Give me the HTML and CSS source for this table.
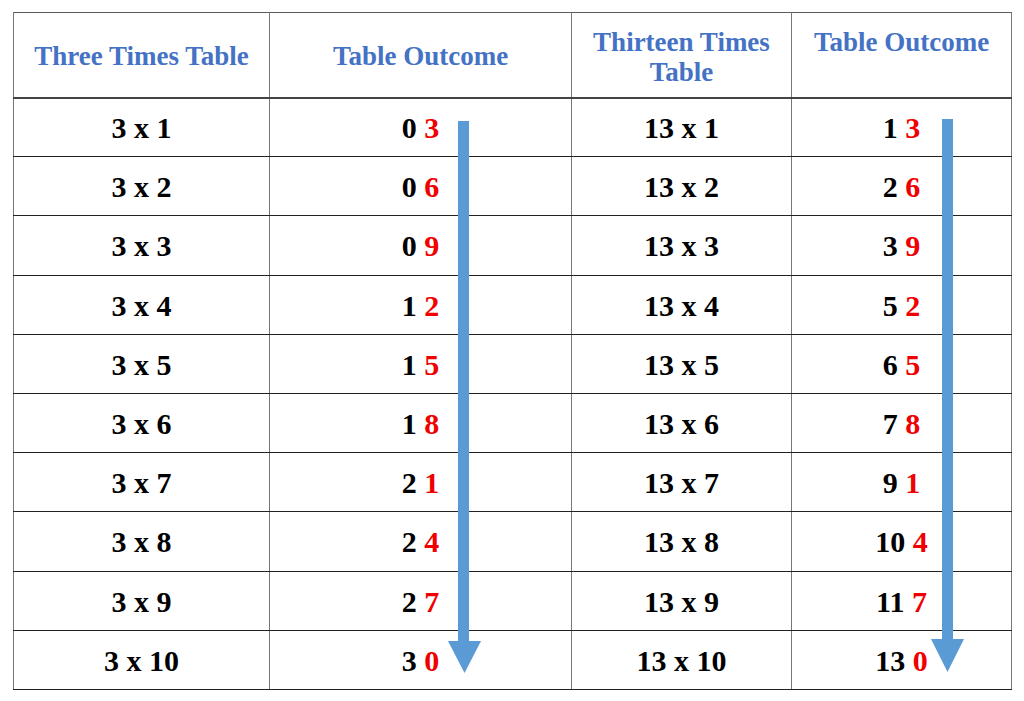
FILE: index.html
```html
<!DOCTYPE html>
<html>
<head>
<meta charset="utf-8">
<link rel="stylesheet" href="styles.css">
</head>
<body>
<div class="wrap">
<table class="tt">
<colgroup>
<col class="c1"><col class="c2"><col class="c3"><col class="c4">
</colgroup>
<thead>
<tr>
<th class="mid">Three Times Table</th>
<th class="mid">Table Outcome</th>
<th class="top">Thirteen Times<br>Table</th>
<th class="top">Table Outcome</th>
</tr>
</thead>
<tbody>
<tr><td>3 x 1</td><td>0 <span class="r">3</span></td><td>13 x 1</td><td>1 <span class="r">3</span></td></tr>
<tr><td>3 x 2</td><td>0 <span class="r">6</span></td><td>13 x 2</td><td>2 <span class="r">6</span></td></tr>
<tr><td>3 x 3</td><td>0 <span class="r">9</span></td><td>13 x 3</td><td>3 <span class="r">9</span></td></tr>
<tr><td>3 x 4</td><td>1 <span class="r">2</span></td><td>13 x 4</td><td>5 <span class="r">2</span></td></tr>
<tr><td>3 x 5</td><td>1 <span class="r">5</span></td><td>13 x 5</td><td>6 <span class="r">5</span></td></tr>
<tr><td>3 x 6</td><td>1 <span class="r">8</span></td><td>13 x 6</td><td>7 <span class="r">8</span></td></tr>
<tr><td>3 x 7</td><td>2 <span class="r">1</span></td><td>13 x 7</td><td>9 <span class="r">1</span></td></tr>
<tr><td>3 x 8</td><td>2 <span class="r">4</span></td><td>13 x 8</td><td>10 <span class="r">4</span></td></tr>
<tr><td>3 x 9</td><td>2 <span class="r">7</span></td><td>13 x 9</td><td>11 <span class="r">7</span></td></tr>
<tr><td>3 x 10</td><td>3 <span class="r">0</span></td><td>13 x 10</td><td>13 <span class="r">0</span></td></tr>
</tbody>
</table>
<svg class="arrows" viewBox="13 12 998 677" width="998" height="677">
<rect x="458" y="121" width="11" height="521" fill="#5B9BD5"/>
<polygon points="448,641 481,641 464.5,673" fill="#5B9BD5"/>
<rect x="942" y="119" width="11" height="521" fill="#5B9BD5"/>
<polygon points="931,639 964,639 947.5,672" fill="#5B9BD5"/>
</svg>
</div>
</body>
</html>
```
FILE: styles.css
```css
html, body {
  margin: 0;
  padding: 0;
  background: #ffffff;
}
body {
  padding: 12px 13px;
  font-family: "Liberation Serif", "Times New Roman", serif;
}
.wrap {
  position: relative;
  width: 998px;
}
.tt {
  border-collapse: collapse;
  table-layout: fixed;
  width: 998px;
  border: 1px solid #5a5a5a;
}
.c1 { width: 256px; }
.c2 { width: 302px; }
.c3 { width: 220px; }
.c4 { width: 220px; }
.tt th {
  height: 85px;
  padding: 0;
  font-size: 27px;
  font-weight: bold;
  color: #4472C4;
  line-height: 30px;
  border-left: 1px solid #777;
  border-right: 1px solid #777;
  border-bottom: 2px solid #444;
  box-sizing: border-box;
}
.tt th.mid { vertical-align: middle; padding-top: 2px; }
.tt th.top { vertical-align: top; padding-top: 14px; }
.tt td {
  height: 59.2px;
  padding: 2px 0 0 0;
  text-align: center;
  vertical-align: middle;
  font-size: 30px;
  font-weight: bold;
  color: #000;
  border-left: 1px solid #777;
  border-right: 1px solid #777;
  border-top: 1px solid #222;
  border-bottom: 1px solid #222;
  box-sizing: border-box;
}
.r { color: #f00000; }
.arrows {
  position: absolute;
  left: 0;
  top: 0;
  pointer-events: none;
}
```
